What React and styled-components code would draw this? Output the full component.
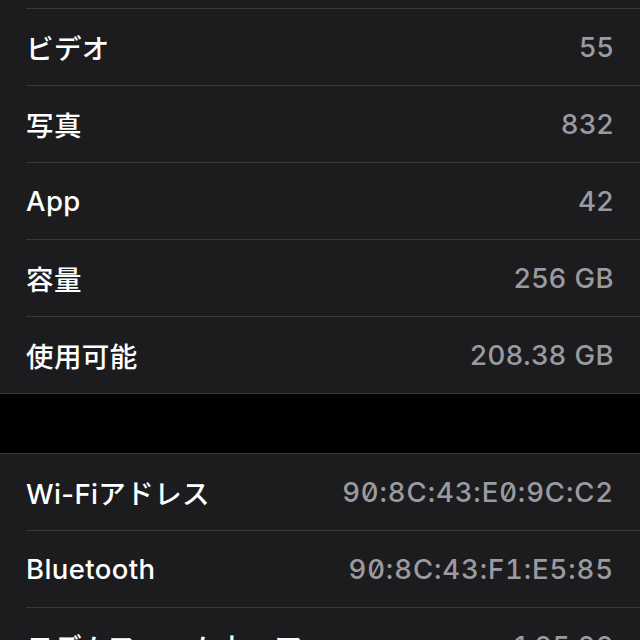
import React from 'react';
import styled, { createGlobalStyle } from 'styled-components';

const GlobalStyle = createGlobalStyle`
  html, body {
    margin: 0;
    padding: 0;
    background: #000;
  }
  body {
    font-family: Inter, "Noto Sans CJK JP", sans-serif;
    -webkit-font-smoothing: antialiased;
  }
`;

const Screen = styled.div`
  width: 640px;
  height: 640px;
  overflow: hidden;
  background: #000;
  display: flex;
  flex-direction: column;
  gap: 59px;
`;

const Group = styled.section`
  background: #1c1c1e;
  border-top: ${({ $bordered }) => ($bordered ? '1px solid #38383a' : 'none')};
  border-bottom: 1px solid #38383a;
`;

/* the bottom edge of the row that has scrolled away above */
const Peek = styled.div`
  height: 8px;
`;

const Row = styled.div`
  height: 76px;
  margin-left: 26px;
  padding-right: 26px;
  display: flex;
  align-items: center;
  justify-content: space-between;
  border-top: ${({ $first }) => ($first ? 'none' : '1px solid #38383a')};
`;

const Label = styled.span`
  color: #fff;
  font-size: 27.5px;
  font-weight: 500;
  letter-spacing: 0.4px;
`;

const Value = styled.span`
  color: #9a9aa0;
  font-size: 27.5px;
  font-weight: 500;
  letter-spacing: ${({ $mono }) => ($mono ? '0.9px' : '0.5px')};
  font-feature-settings: ${({ $mono }) => ($mono ? '"zero" 1, "tnum" 1' : 'normal')};
`;

const storage = [
  ['ビデオ', '55'],
  ['写真', '832'],
  ['App', '42'],
  ['容量', '256 GB'],
  ['使用可能', '208.38 GB'],
];

const network = [
  ['Wi-Fiアドレス', '90:8C:43:E0:9C:C2', true],
  ['Bluetooth', '90:8C:43:F1:E5:85', true],
  ['モデムファームウェア', '1.05.00', false],
];

const App = () => (
  <>
    <GlobalStyle />
    <Screen>
      <Group>
        <Peek />
        {storage.map(([label, value]) => (
          <Row key={label}>
            <Label>{label}</Label>
            <Value>{value}</Value>
          </Row>
        ))}
      </Group>
      <Group $bordered>
        {network.map(([label, value, mono], i) => (
          <Row key={label} $first={i === 0}>
            <Label>{label}</Label>
            <Value $mono={mono}>{value}</Value>
          </Row>
        ))}
      </Group>
    </Screen>
  </>
);

export default App;
